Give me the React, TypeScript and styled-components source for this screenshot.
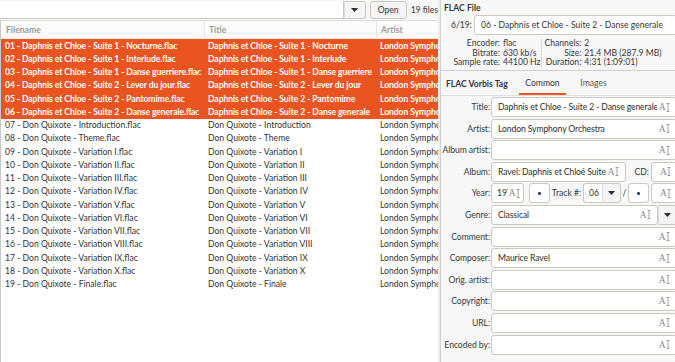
import React, { FC } from 'react'
import styled, { createGlobalStyle, css } from 'styled-components'

const ORANGE = '#e95420'
const BORDER = '#cdc7c2'

const GlobalStyle = createGlobalStyle`
  html, body {
    margin: 0;
    padding: 0;
    background: #f7f7f7;
  }
`

type TTrack = {
  file: string
  title: string
  selected?: boolean
}

const tracks: TTrack[] = [
  { file: '01 - Daphnis et Chloe - Suite 1 - Nocturne.flac', title: 'Daphnis et Chloe - Suite 1 - Nocturne', selected: true },
  { file: '02 - Daphnis et Chloe - Suite 1 - Interlude.flac', title: 'Daphnis et Chloe - Suite 1 - Interlude', selected: true },
  { file: '03 - Daphnis et Chloe - Suite 1 - Danse guerriere.flac', title: 'Daphnis et Chloe - Suite 1 - Danse guerriere', selected: true },
  { file: '04 - Daphnis et Chloe - Suite 2 - Lever du jour.flac', title: 'Daphnis et Chloe - Suite 2 - Lever du jour', selected: true },
  { file: '05 - Daphnis et Chloe - Suite 2 - Pantomime.flac', title: 'Daphnis et Chloe - Suite 2 - Pantomime', selected: true },
  { file: '06 - Daphnis et Chloe - Suite 2 - Danse generale.flac', title: 'Daphnis et Chloe - Suite 2 - Danse generale', selected: true },
  { file: '07 - Don Quixote - Introduction.flac', title: 'Don Quixote - Introduction' },
  { file: '08 - Don Quixote - Theme.flac', title: 'Don Quixote - Theme' },
  { file: '09 - Don Quixote - Variation I.flac', title: 'Don Quixote - Variation I' },
  { file: '10 - Don Quixote - Variation II.flac', title: 'Don Quixote - Variation II' },
  { file: '11 - Don Quixote - Variation III.flac', title: 'Don Quixote - Variation III' },
  { file: '12 - Don Quixote - Variation IV.flac', title: 'Don Quixote - Variation IV' },
  { file: '13 - Don Quixote - Variation V.flac', title: 'Don Quixote - Variation V' },
  { file: '14 - Don Quixote - Variation VI.flac', title: 'Don Quixote - Variation VI' },
  { file: '15 - Don Quixote - Variation VII.flac', title: 'Don Quixote - Variation VII' },
  { file: '16 - Don Quixote - Variation VIII.flac', title: 'Don Quixote - Variation VIII' },
  { file: '17 - Don Quixote - Variation IX.flac', title: 'Don Quixote - Variation IX' },
  { file: '18 - Don Quixote - Variation X.flac', title: 'Don Quixote - Variation X' },
  { file: '19 - Don Quixote - Finale.flac', title: 'Don Quixote - Finale' },
]

const TextIcon: FC = () => (
  <IconWrap>
    <IconA>A</IconA>
    <svg width="4" height="9" viewBox="0 0 4 9">
      <path d="M0.5 0.5h3M2 0.5v8M0.5 8.5h3" stroke="#8a8a8a" strokeWidth="0.8" fill="none" />
    </svg>
  </IconWrap>
)

const Arrow: FC = () => (
  <svg width="7" height="4" viewBox="0 0 7 4">
    <path d="M0 0h7L3.5 4z" fill="#2e2e2e" />
  </svg>
)

type TFieldProps = { value?: string; tight?: boolean }

const TextField: FC<TFieldProps> = ({ value, tight }) => (
  <Entry $tight={tight}>
    <EntryText>{value}</EntryText>
    <TextIcon />
  </Entry>
)

const SpinDot: FC = () => (
  <SpinBox>
    <Dot />
  </SpinBox>
)

const FormLine: FC<{ label: string; children: React.ReactNode }> = ({ label, children }) => (
  <>
    <FieldLabel>{label}</FieldLabel>
    <FieldBody>{children}</FieldBody>
  </>
)

export default function App() {
  return (
    <Root>
      <GlobalStyle />
      <LeftPane>
        <Toolbar>
          <ComboEntry />
          <ComboButton>
            <Arrow />
          </ComboButton>
          <PushButton>Open</PushButton>
          <FilesCount>19 files</FilesCount>
        </Toolbar>
        <FileTable>
          <HeaderRow>
            <HeaderCell>Filename</HeaderCell>
            <HeaderCell $divided>Title</HeaderCell>
            <HeaderCell $divided>Artist</HeaderCell>
          </HeaderRow>
          {tracks.map((t) => (
            <TrackRow key={t.file} $selected={t.selected}>
              <Cell>{t.file}</Cell>
              <Cell>{t.title}</Cell>
              <Cell>London Symphony Orchestra</Cell>
            </TrackRow>
          ))}
        </FileTable>
      </LeftPane>
      <PaneHandle />
      <RightPane>
        <FileSection>
          <SectionTitle>FLAC File</SectionTitle>
          <FileRow>
            <IndexLabel>6/19:</IndexLabel>
            <WideEntry>06 - Daphnis et Chloe - Suite 2 - Danse generale</WideEntry>
          </FileRow>
          <InfoGrid>
            <InfoColumn $labelWidth="59px">
              <InfoLabel>Encoder:</InfoLabel>
              <InfoValue>flac</InfoValue>
              <InfoLabel>Bitrate:</InfoLabel>
              <InfoValue>630 kb/s</InfoValue>
              <InfoLabel>Sample rate:</InfoLabel>
              <InfoValue>44100 Hz</InfoValue>
            </InfoColumn>
            <InfoDivider />
            <InfoColumn $labelWidth="max-content">
              <InfoLabel>Channels:</InfoLabel>
              <InfoValue>2</InfoValue>
              <InfoLabel>Size:</InfoLabel>
              <InfoValue>21.4 MB (287.9 MB)</InfoValue>
              <InfoLabel>Duration:</InfoLabel>
              <InfoValue>4:31 (1:09:01)</InfoValue>
            </InfoColumn>
          </InfoGrid>
        </FileSection>
        <TagFrame>
          <TabBar>
            <TagTitle>FLAC Vorbis Tag</TagTitle>
            <Tab $active>Common</Tab>
            <Tab>Images</Tab>
          </TabBar>
          <Form>
            <FormLine label="Title:">
              <TextField value="Daphnis et Chloe - Suite 2 - Danse generale" />
            </FormLine>
            <FormLine label="Artist:">
              <TextField value="London Symphony Orchestra" />
            </FormLine>
            <FormLine label="Album artist:">
              <TextField />
            </FormLine>
            <FormLine label="Album:">
              <Fixed $width={135}>
                <TextField value="Ravel: Daphnis et Chloé Suites I & II" />
              </Fixed>
              <InlineLabel $width={25} $end>
                CD:
              </InlineLabel>
              <TextField />
            </FormLine>
            <FormLine label="Year:">
              <Fixed $width={33}>
                <TextField value="1975" tight />
              </Fixed>
              <Gap $width={5} />
              <SpinDot />
              <InlineLabel $width={33}>Track #:</InlineLabel>
              <TrackCombo>
                <TrackEntry>06</TrackEntry>
                <ComboButton $small>
                  <Arrow />
                </ComboButton>
              </TrackCombo>
              <InlineLabel $width={7}>/</InlineLabel>
              <SpinDot />
              <Gap $width={2} />
              <TextField />
            </FormLine>
            <FormLine label="Genre:">
              <TextField value="Classical" />
              <ComboButton $small>
                <Arrow />
              </ComboButton>
            </FormLine>
            <FormLine label="Comment:">
              <TextField />
            </FormLine>
            <FormLine label="Composer:">
              <TextField value="Maurice Ravel" />
            </FormLine>
            <FormLine label="Orig. artist:">
              <TextField />
            </FormLine>
            <FormLine label="Copyright:">
              <TextField />
            </FormLine>
            <FormLine label="URL:">
              <TextField />
            </FormLine>
            <FormLine label="Encoded by:">
              <TextField />
            </FormLine>
          </Form>
        </TagFrame>
      </RightPane>
    </Root>
  )
}

const Root = styled.div`
  display: flex;
  width: 675px;
  height: 362px;
  overflow: hidden;
  background: #f7f7f7;
  font-family: Lato, 'Noto Sans', sans-serif;
  font-size: 8.6px;
  color: #363636;
`

const LeftPane = styled.div`
  width: 438px;
  flex-shrink: 0;
  display: flex;
  flex-direction: column;
`

const Toolbar = styled.div`
  height: 20px;
  display: flex;
  align-items: flex-start;
  padding-top: 1px;
  box-sizing: border-box;
`

const ComboEntry = styled.div`
  flex: 1;
  height: 18px;
  box-sizing: border-box;
  background: #fff;
  border: 1px solid ${BORDER};
  border-left: none;
  border-top: none;
`

const ComboButton = styled.div<{ $small?: boolean }>`
  width: ${(p) => (p.$small ? 19 : 22)}px;
  height: ${(p) => (p.$small ? 20 : 18)}px;
  flex-shrink: 0;
  box-sizing: border-box;
  display: flex;
  align-items: center;
  justify-content: center;
  background: #f4f4f4;
  border: 1px solid ${BORDER};
  border-left-color: #ddd;
  border-radius: 0 3px 3px 0;
`

const PushButton = styled.div`
  width: 37px;
  height: 18px;
  margin-left: 4px;
  box-sizing: border-box;
  display: flex;
  align-items: center;
  justify-content: center;
  background: #f4f4f4;
  border: 1px solid ${BORDER};
  border-radius: 3px;
`

const FilesCount = styled.div`
  margin-left: 4px;
  line-height: 18px;
  white-space: nowrap;
`

const FileTable = styled.div`
  flex: 1;
  background: #fff;
  border-left: 1px solid #c8c8c8;
  border-top: 1px solid #dcdcdc;
  overflow: hidden;
`

const COLUMNS = '203px 172px 1fr'

const HeaderRow = styled.div`
  display: grid;
  grid-template-columns: ${COLUMNS};
  height: 17px;
  align-items: center;
  border-bottom: 1px solid #ececec;
  background: #fcfcfc;
`

const HeaderCell = styled.div<{ $divided?: boolean }>`
  height: 100%;
  display: flex;
  align-items: center;
  padding-left: 4px;
  font-weight: bold;
  color: #9a9a9a;
  border-left: 1px solid ${(p) => (p.$divided ? '#e6e6e6' : 'transparent')};
`

const TrackRow = styled.div<{ $selected?: boolean }>`
  display: grid;
  grid-template-columns: ${COLUMNS};
  height: 13.25px;
  align-items: center;
  ${(p) =>
    p.$selected
      ? css`
          background: ${ORANGE};
          color: #fff;
          font-weight: bold;
          letter-spacing: -0.08px;
        `
      : css`
          color: #333;
        `}
`

const Cell = styled.div`
  padding-left: 4px;
  white-space: nowrap;
  overflow: hidden;
`

const PaneHandle = styled.div`
  width: 2px;
  flex-shrink: 0;
  background: #ececec;
  border-right: 1px solid #d2d2d2;
`

const RightPane = styled.div`
  width: 236px;
  flex-shrink: 0;
  display: flex;
  flex-direction: column;
`

const FileSection = styled.div`
  height: 70px;
  padding-left: 3px;
  box-sizing: border-box;
`

const SectionTitle = styled.div`
  font-weight: bold;
  height: 15px;
  padding-top: 2px;
  box-sizing: border-box;
  line-height: 13px;
`

const FileRow = styled.div`
  display: flex;
  align-items: center;
  height: 20px;
`

const IndexLabel = styled.div`
  width: 30px;
  padding-left: 7px;
  box-sizing: border-box;
`

const WideEntry = styled.div`
  flex: 1;
  height: 20px;
  box-sizing: border-box;
  border: 1px solid ${BORDER};
  border-radius: 3px;
  background: #fff;
  display: flex;
  align-items: center;
  padding-left: 6px;
  white-space: nowrap;
  overflow: hidden;
`

const InfoGrid = styled.div`
  display: flex;
  margin-left: -3px;
  margin-top: 4px;
`

const InfoColumn = styled.div<{ $labelWidth: string }>`
  display: grid;
  grid-template-columns: ${(p) => p.$labelWidth} auto;
  column-gap: 3px;
  line-height: 9.7px;
  padding-right: 1px;
`

const InfoLabel = styled.div`
  text-align: right;
  white-space: nowrap;
`

const InfoValue = styled.div`
  white-space: nowrap;
`

const InfoDivider = styled.div`
  width: 1px;
  background: #d6d6d6;
  margin-right: 2px;
`

const TagFrame = styled.div`
  flex: 1;
  border-top: 1px solid #d0d0d0;
  border-left: 1px solid #d0d0d0;
  margin-left: -1px;
`

const TabBar = styled.div`
  height: 24px;
  display: flex;
  align-items: stretch;
  border-bottom: 1px solid #dedede;
  padding-left: 5px;
`

const TagTitle = styled.div`
  font-weight: bold;
  display: flex;
  align-items: center;
  width: 73px;
  padding-top: 1px;
`

const Tab = styled.div<{ $active?: boolean }>`
  width: 47px;
  margin-right: 4px;
  display: flex;
  align-items: center;
  justify-content: center;
  box-sizing: border-box;
  padding-top: 1px;
  border-bottom: 2px solid ${(p) => (p.$active ? ORANGE : 'transparent')};
  color: ${(p) => (p.$active ? '#363636' : '#555')};
`

const Form = styled.div`
  display: grid;
  grid-template-columns: 50px 1fr;
  grid-auto-rows: 20px;
  row-gap: 1.6px;
  padding-top: 1px;
`

const FieldLabel = styled.div`
  display: flex;
  justify-content: flex-end;
  align-items: center;
  white-space: nowrap;
  padding-right: 1px;
  letter-spacing: -0.05px;
  min-width: 0;
`

const FieldBody = styled.div`
  display: flex;
  align-items: stretch;
  min-width: 0;
`

const Entry = styled.div<{ $tight?: boolean }>`
  flex: 1;
  min-width: 0;
  height: 20px;
  box-sizing: border-box;
  background: #fff;
  border: 1px solid ${BORDER};
  border-radius: 3px;
  display: flex;
  align-items: center;
  padding: 0 ${(p) => (p.$tight ? '3px 0 5px' : '6px')};
  gap: ${(p) => (p.$tight ? 1 : 2)}px;
`

const EntryText = styled.div`
  flex: 1;
  min-width: 0;
  overflow: hidden;
  white-space: nowrap;
  letter-spacing: -0.1px;
  color: #2e2e2e;
`

const IconWrap = styled.div`
  display: flex;
  align-items: center;
  flex-shrink: 0;
`

const IconA = styled.span`
  font-family: 'Liberation Serif', serif;
  font-size: 9.5px;
  color: #8a8a8a;
  margin-right: 0.5px;
`

const Fixed = styled.div<{ $width: number }>`
  width: ${(p) => p.$width}px;
  flex-shrink: 0;
  display: flex;
`

const Gap = styled.div<{ $width: number }>`
  width: ${(p) => p.$width}px;
  flex-shrink: 0;
`

const InlineLabel = styled.div<{ $width: number; $end?: boolean }>`
  width: ${(p) => p.$width}px;
  flex-shrink: 0;
  box-sizing: border-box;
  display: flex;
  align-items: center;
  justify-content: ${(p) => (p.$end ? 'flex-end' : 'center')};
  padding-right: ${(p) => (p.$end ? 2 : 0)}px;
  white-space: nowrap;
`

const SpinBox = styled.div`
  width: 21px;
  flex-shrink: 0;
  box-sizing: border-box;
  background: #fff;
  border: 1px solid ${BORDER};
  border-radius: 3px;
  display: flex;
  align-items: center;
  justify-content: center;
`

const Dot = styled.div`
  width: 2.5px;
  height: 2.5px;
  border-radius: 50%;
  background: #2b3a8c;
`

const TrackCombo = styled.div`
  display: flex;
  width: 38px;
  flex-shrink: 0;
`

const TrackEntry = styled.div`
  flex: 1;
  box-sizing: border-box;
  background: #fff;
  border: 1px solid ${BORDER};
  border-right: none;
  border-radius: 3px 0 0 3px;
  display: flex;
  align-items: center;
  padding-left: 5px;
`
